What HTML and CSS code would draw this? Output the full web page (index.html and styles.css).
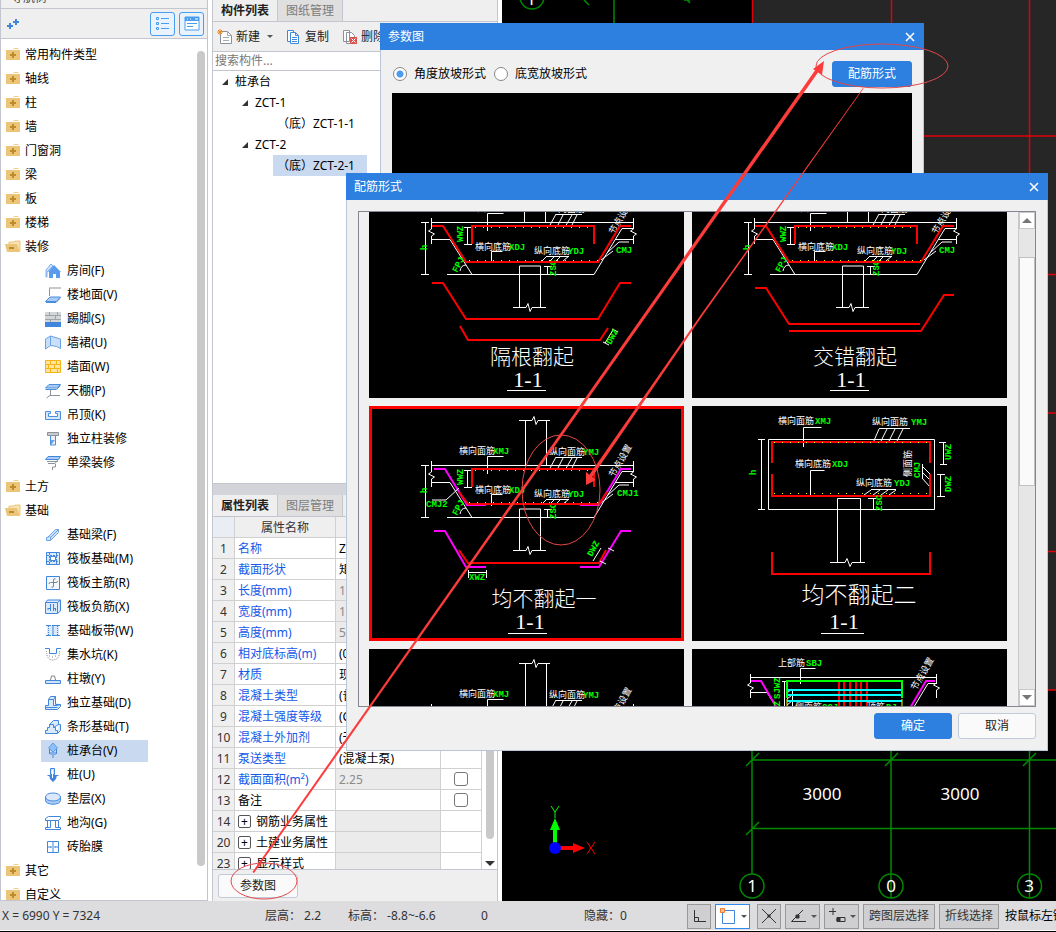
FILE: index.html
```html
<!DOCTYPE html>
<html lang="zh-CN">
<head>
    <meta charset="UTF-8">
    <meta name="viewport" content="width=device-width, initial-scale=1.0">
    <title>构件定义</title>
    <link rel="stylesheet" href="styles.css">
</head>
<body>
    <svg class="defs" width="0" height="0" aria-hidden="true">
        <!-- tree icons -->
        <symbol id="folder" viewBox="0 1 16 16"><path d="M8 3l1-1h4l1 1z" fill="#f3cf8e"/><path d="M1 4h14v10H1z" fill="#edc579"/><path d="M7 6h2v2h2v2H9v2H7v-2H5V8h2z" fill="#bd8a2c"/></symbol>
        <symbol id="folder-open" viewBox="0 1 16 16"><path d="M4 6V4h5l1-1h5v10" fill="#f8e2b4" stroke="#edc579"/><path d="M0 6h12l3 8H2z" fill="#edc579"/><path d="M4 9h5v2H4z" fill="#bd8a2c"/></symbol>
        <symbol id="i-room" viewBox="0 0 16 16"><path d="M1 7l5-6 2 2-6 6v5H1z" fill="#cfe2fa" stroke="#7db0ee"/><path d="M9 2l7 7h-1v6h-4v-4H8v4H4V9H3z" fill="#5a9cec"/></symbol>
        <symbol id="i-floor" viewBox="0 0 16 16"><path d="M4.500 9V1.500M4 1h12" stroke="#8b929a" fill="none"/><path d="M5 10h10.500l-4 4.500H.500z" fill="#a9cbf6" stroke="#4a8ede"/><path d="M1 15.500h10l4-4" stroke="#4a8ede" fill="none"/></symbol>
        <symbol id="i-skirt" viewBox="0 0 16 16"><path d="M0 1h16v10H0z" fill="#d3d5d6"/><path d="M0 4.500h16M0 8.500h16M4.500 1v3M10.500 5v3M5.500 9v2M12.500 1v3" stroke="#9fa4a8"/><path d="M0 11h16v5H0z" fill="#3f86dc"/></symbol>
        <symbol id="i-dado" viewBox="0 0 16 16"><path d="M.500 4l5-3v9.500l-5 3.500zM5.500 1l10 3v9.500l-4-2-6-1z" fill="#c9def9" stroke="#6aa3e8"/></symbol>
        <symbol id="i-wall" viewBox="0 0 16 16"><path d="M.500 1.500h15v12H.500z" fill="#ffe49d" stroke="#f5b316"/><path d="M0 5.500h16M0 9.500h16M5.500 1v4M11.500 1v4M3.500 6v3M9.500 6v3M5.500 10v4M12.500 10v4" stroke="#f5b316"/></symbol>
        <symbol id="i-ceil" viewBox="0 0 16 16"><path d="M4 1.500h11.500l-4 3.500H.500z" fill="#a9cbf6" stroke="#4a8ede"/><path d="M.500 6.500h11l4-4" fill="none" stroke="#4a8ede"/><path d="M5.500 7v5l-4 3M5 12.500h10" fill="none" stroke="#8b929a"/></symbol>
        <symbol id="i-susp" viewBox="0 0 16 16"><path d="M.500 4.500h5v2h-2v3h9v-3h-2v-2h5v8H.500z" fill="#d5e6fb" stroke="#4a8ede"/></symbol>
        <symbol id="i-col" viewBox="0 0 16 16"><path d="M2.500 1.500h11v3h-11z" fill="#c8cbce" stroke="#8b929a"/><path d="M5.500 5v9h5V5" fill="#e8f1fd" stroke="#4a8ede"/><path d="M6 9h4l-4 5z" fill="#6aa3e8"/></symbol>
        <symbol id="i-beam" viewBox="0 0 16 16"><path d="M3 1.500h12.500l-2 3H.500z" fill="#a9cbf6" stroke="#3f86dc"/><path d="M2 6.500h11M3 8.500h7l3-4M7.500 15v-3h3V9" fill="none" stroke="#8b929a"/></symbol>
        <symbol id="f-beam" viewBox="0 0 16 16"><path d="M2.500 10.500l8-8h3v3l-8 8h-4v-3zM5.500 13v-3h-3M5.500 10.500l8-8" fill="#cfe2fa" stroke="#6aa3e8"/></symbol>
        <symbol id="f-raft" viewBox="0 0 16 16"><path d="M1.500 1.500h13v12h-13z" fill="#dbe9fc" stroke="#3f86dc"/><path d="M4.500 2v11M11.500 2v11M2 4.500h12M2 10.500h12" stroke="#3f86dc" stroke-dasharray="2 1"/><path d="M5.500 5.500h5v4h-5z" fill="#fff" stroke="#3f86dc"/></symbol>
        <symbol id="f-main" viewBox="0 0 16 16"><path d="M1.500 1.500h13v13h-13z" fill="#f3f8fe" stroke="#3f86dc"/><path d="M10.500 4q-2-1-2 1v6q0 2-2 1M4 9q0-1.500 1.500-1.500H11q1.500 0 1.500-1.500" fill="none" stroke="#7e858c"/></symbol>
        <symbol id="f-neg" viewBox="0 0 16 16"><path d="M.500 3.500l2-2.500h13v11l-3 2.500H.500zM.500 3.500h12v11M12.500 3.500l3-2.500" fill="#dbe9fc" stroke="#3f86dc"/><path d="M5.500 5v7M8.500 5v7M3 9.500h3M8 9.500h3M3 9v2M10.500 9v3" stroke="#3f86dc"/></symbol>
        <symbol id="f-band" viewBox="0 0 16 16"><path d="M2 2h12v11H2z" fill="#dbe9fc"/><path d="M1 2.500h5M7 2.500h8M1 12.500h5M7 12.500h8M8 2v11" stroke="#3f86dc"/><path d="M3.500 3v9M12.500 3v9" stroke="#3f86dc" stroke-dasharray="1 1"/></symbol>
        <symbol id="f-pit" viewBox="0 0 16 16"><path d="M0 1.500h4.500v5h7v-5H16" fill="none" stroke="#3f86dc"/><path d="M1.500 4q0 9 6.500 9t6.500-9M4 9h1M7 10h1M10 9h1" fill="none" stroke="#7e858c" stroke-dasharray="1 1"/></symbol>
        <symbol id="f-pier" viewBox="0 0 16 16"><path d="M.500 9.500h15v3H.500z" fill="#cfe2fa" stroke="#3f86dc"/><path d="M5.500 9l1-4h3l1 4" fill="#fff" stroke="#7e858c"/></symbol>
        <symbol id="f-iso" viewBox="0 0 16 16"><path d="M.500 10.500h3v-6l2-3h5v8h5v2l-3 3H.500zM3.500 4.500h5v6h4l3-1M8.500 4.500l2-3M.500 12.500h12" fill="#dbe9fc" stroke="#3f86dc"/></symbol>
        <symbol id="f-strip" viewBox="0 0 16 16"><path d="M.500 14.500v-3h2v-3h2v-3h4v3h2v3h2v3zM4.500 5.500l4-4h5v4l-5 3M13.500 5.500h2v6l-3 3" fill="#dbe9fc" stroke="#3f86dc"/></symbol>
        <symbol id="f-cap" viewBox="0 0 16 16"><path d="M8 0l4.500 5L8 9 3.500 5z" fill="#8fc1f7" stroke="#5a9cec"/><path d="M4.500 6v5M11.500 6v5M8 9v6M6 9v3M10 9v3" stroke="#3f86dc"/></symbol>
        <symbol id="f-pile" viewBox="0 0 16 16"><path d="M5.500 1.500h4v6h-4zM2.500 8.500h11" fill="#cfe2fa" stroke="#3f86dc"/><path d="M4 8h8l-1 4H5zM5 12l3 3 3-3z" fill="#3f86dc"/><path d="M7 3h1v8H7z" fill="#fff"/></symbol>
        <symbol id="f-pad" viewBox="0 0 16 16"><path d="M.500 6v3.500c0 5 15 5 15 0V6" fill="#a9cbf6" stroke="#4a8ede"/><ellipse cx="8" cy="6" rx="7.500" ry="4" fill="#dbe9fc" stroke="#4a8ede"/></symbol>
        <symbol id="f-ditch" viewBox="0 0 16 16"><path d="M.500 3.500l3-2h12v2l-2 2H.500zM2.500 5.500v7M5.500 5.500v7M10.500 5.500v7M13.500 5.500v7M.500 12.500h5M10.500 12.500h5v2H.500v-2" fill="none" stroke="#3f86dc"/></symbol>
        <symbol id="f-brick" viewBox="0 0 16 16"><path d="M2.500 2.500h11v11h-11zM8 2v12M2 8h4M10 8h4" fill="#fff" stroke="#3f86dc"/><path d="M6 7v2M10 7v2" stroke="#3f86dc"/></symbol>

        <!-- section drawing shared by the pile cap cards -->
        <g id="pile-top">
            <path class="w" d="M156.500 14v45M177.500 14v45M150 14.500h13l2-4 2 8 2-4h12"/>
        </g>
        <g id="top-labels">
            <text class="cn" x="90" y="48">横向面筋</text><text class="en" x="124" y="48">XMJ</text>
            <text class="cn" x="180" y="49">纵向面筋</text><text class="en" x="214" y="49">YMJ</text>
            <path class="w" d="M118.500 68V50.500h16M187 51.500h26M187 51l-7 13M194 52l-6 12M203 52l-7 12M208 52l-6 12"/>
            <text class="cn" transform="translate(245 72) rotate(-60)">节点设置</text>
        </g>
        <g id="cap">
            <path class="w" d="M62 59.500h203M62.500 55v11l-3 2 6 3-3 2v8M264.500 55v11l-3 2 6 3-3 2v8"/>
            <path class="w" d="M52 59.500h8M52 111.500h8M56.500 59v52"/>
            <path class="w" d="M62 76.500h19l22 35M78 111.500h147l28-46h11M246 76.500h18M238 90l12-11h10M232 97l12-9"/>
            <path class="w" d="M95 64.500h8M95 81.500h8M98.500 64v17M91 108q1-6 6-6"/>
            <path class="w" d="M150.500 144v-41h21v41M144 144.500h13l2-4 2 8 2-4h14M175 103.500h8M178.500 104v7"/>
            <path class="r" d="M103 81V63h122v18"/>
            <path class="dots" d="M106 64.500h116"/>
            <path class="m dot" d="M232 94l14-20"/>
            <text class="cn" x="106" y="87">横向底筋</text><text class="en" x="140" y="87">XDJ</text>
            <text class="cn" x="165" y="91">纵向底筋</text><text class="en" x="199" y="91">YDJ</text>
            <path class="w" d="M122.500 100V88.500h11M178 93.500h22M178 93l-5 5M186 93l-5 5M192 93l-5 5M200 93l-6 5"/>
            <text class="en" transform="translate(58 87) rotate(-90)">h</text>
            <text class="en" transform="translate(94 79) rotate(-90)">WWZ</text>
            <text class="en" transform="translate(187 113) rotate(-90)">ZSC</text>
            <text class="en" transform="translate(88 110) rotate(-62)">FPJ</text>
        </g>
    </svg>

    <div class="app">
        <main class="work">
            <nav class="nav">
                <div class="nav-title">导航树</div>
                <div class="nav-tools">
                    <svg width="14" height="12" viewBox="0 0 14 12"><path d="M0 7h2V5h2v2h2v2H4v2H2V9H0zM6 3h2V1h2v2h2v2h-2v2H8V5H6z" fill="#3f86dc"/></svg>
                    <span class="grow"></span>
                    <button class="tool" aria-label="列表视图"><svg width="16" height="16" viewBox="0 0 16 16" fill="none" stroke="#4a9cf0"><path d="M1.500 1.500h2v2h-2zM1.500 6.500h2v2h-2zM1.500 11.500h2v2h-2zM6 2.500h8M6 7.500h8M6 12.500h8"/></svg></button>
                    <button class="tool" aria-label="窗口视图"><svg width="16" height="16" viewBox="0 0 16 16"><path d="M1 1h14v13H1z" fill="#fff" stroke="#4a9cf0"/><path d="M1 1h14v4H1z" fill="#4a9cf0"/><path d="M3 3h1M6 3h1M11 3h3" stroke="#fff"/><path d="M3 7.500h10M3 10.500h6" stroke="#4a9cf0"/></svg></button>
                </div>
                <div class="nav-body">
                    <ul class="types">
                        <li><a href="#"><svg><use href="#folder"/></svg>常用构件类型</a></li>
                        <li><a href="#"><svg><use href="#folder"/></svg>轴线</a></li>
                        <li><a href="#"><svg><use href="#folder"/></svg>柱</a></li>
                        <li><a href="#"><svg><use href="#folder"/></svg>墙</a></li>
                        <li><a href="#"><svg><use href="#folder"/></svg>门窗洞</a></li>
                        <li><a href="#"><svg><use href="#folder"/></svg>梁</a></li>
                        <li><a href="#"><svg><use href="#folder"/></svg>板</a></li>
                        <li><a href="#"><svg><use href="#folder"/></svg>楼梯</a></li>
                        <li><a href="#"><svg><use href="#folder-open"/></svg>装修</a>
                            <ul>
                                <li><a href="#"><svg><use href="#i-room"/></svg>房间(F)</a></li>
                                <li><a href="#"><svg><use href="#i-floor"/></svg>楼地面(V)</a></li>
                                <li><a href="#"><svg><use href="#i-skirt"/></svg>踢脚(S)</a></li>
                                <li><a href="#"><svg><use href="#i-dado"/></svg>墙裙(U)</a></li>
                                <li><a href="#"><svg><use href="#i-wall"/></svg>墙面(W)</a></li>
                                <li><a href="#"><svg><use href="#i-ceil"/></svg>天棚(P)</a></li>
                                <li><a href="#"><svg><use href="#i-susp"/></svg>吊顶(K)</a></li>
                                <li><a href="#"><svg><use href="#i-col"/></svg>独立柱装修</a></li>
                                <li><a href="#"><svg><use href="#i-beam"/></svg>单梁装修</a></li>
                            </ul>
                        </li>
                        <li><a href="#"><svg><use href="#folder"/></svg>土方</a></li>
                        <li><a href="#"><svg><use href="#folder-open"/></svg>基础</a>
                            <ul>
                                <li><a href="#"><svg><use href="#f-beam"/></svg>基础梁(F)</a></li>
                                <li><a href="#"><svg><use href="#f-raft"/></svg>筏板基础(M)</a></li>
                                <li><a href="#"><svg><use href="#f-main"/></svg>筏板主筋(R)</a></li>
                                <li><a href="#"><svg><use href="#f-neg"/></svg>筏板负筋(X)</a></li>
                                <li><a href="#"><svg><use href="#f-band"/></svg>基础板带(W)</a></li>
                                <li><a href="#"><svg><use href="#f-pit"/></svg>集水坑(K)</a></li>
                                <li><a href="#"><svg><use href="#f-pier"/></svg>柱墩(Y)</a></li>
                                <li><a href="#"><svg><use href="#f-iso"/></svg>独立基础(D)</a></li>
                                <li><a href="#"><svg><use href="#f-strip"/></svg>条形基础(T)</a></li>
                                <li><a href="#" class="on"><svg><use href="#f-cap"/></svg>桩承台(V)</a></li>
                                <li><a href="#"><svg><use href="#f-pile"/></svg>桩(U)</a></li>
                                <li><a href="#"><svg><use href="#f-pad"/></svg>垫层(X)</a></li>
                                <li><a href="#"><svg><use href="#f-ditch"/></svg>地沟(G)</a></li>
                                <li><a href="#"><svg><use href="#f-brick"/></svg>砖胎膜</a></li>
                            </ul>
                        </li>
                        <li><a href="#"><svg><use href="#folder"/></svg>其它</a></li>
                        <li><a href="#"><svg><use href="#folder"/></svg>自定义</a></li>
                    </ul>
                    <div class="bar"></div>
                </div>
            </nav>

            <div class="middle">
                <section class="list">
                    <div class="tabs"><button class="tab active">构件列表</button><button class="tab">图纸管理</button></div>
                    <div class="cmds">
                        <button><svg width="16" height="16" viewBox="0 0 16 16"><path d="M3.500 2.500h7l4 4v8h-11z" fill="#fff" stroke="#8b929a"/><path d="M10.500 2.500v4h4M6 8.500h6M6 11.500h6" fill="none" stroke="#a4abb1"/><path d="M1 1l4 4M5 1L1 5M3 0v6M0 3h6" stroke="#ee8a1d"/></svg>新建<i class="caret"></i></button>
                        <button><svg width="16" height="16" viewBox="0 0 16 16" fill="#fff" stroke="#3f86dc"><path d="M1.500 1.500h6v11h-6z"/><path d="M4.500 3.500h5l3 3v8h-8zM9.500 3.500v3h3M6 8.500h5M6 10.500h5M6 12.500h5"/></svg>复制</button>
                        <button><svg width="16" height="16" viewBox="0 0 16 16"><path d="M1.500 1.500h6v11h-6zM4.500 3.500h5l3 3v8h-8z" fill="#fff" stroke="#8b929a"/><path d="M8 8h7v7H8z" fill="#d9534f"/><path d="M9.500 9.500l4 4M13.500 9.500l-4 4" stroke="#fff"/></svg>删除</button>
                    </div>
                    <input class="search" type="text" placeholder="搜索构件..." aria-label="搜索构件">
                    <ul class="parts">
                        <li><a href="#" class="l1"><i class="tri"></i>桩承台</a></li>
                        <li><a href="#" class="l2"><i class="tri"></i>ZCT-1</a></li>
                        <li><a href="#" class="l3">（底）ZCT-1-1</a></li>
                        <li><a href="#" class="l2"><i class="tri"></i>ZCT-2</a></li>
                        <li><a href="#" class="l3 on">（底）ZCT-2-1</a></li>
                    </ul>
                </section>
                <div class="split"></div>
                <section class="props">
                    <div class="tabs"><button class="tab active">属性列表</button><button class="tab">图层管理</button></div>
                    <div class="grid-wrap">
                        <table>
                            <thead><tr><th></th><th>属性名称</th><th>属性值</th><th>附加</th></tr></thead>
                            <tbody>
                                <tr><td>1</td><td>名称</td><td>ZCT-2</td><td></td></tr>
                                <tr><td>2</td><td>截面形状</td><td>矩形</td><td></td></tr>
                                <tr class="ro"><td>3</td><td>长度(mm)</td><td>1500</td><td></td></tr>
                                <tr class="ro"><td>4</td><td>宽度(mm)</td><td>1500</td><td></td></tr>
                                <tr class="ro"><td>5</td><td>高度(mm)</td><td>500</td><td></td></tr>
                                <tr><td>6</td><td>相对底标高(m)</td><td>(0)</td><td></td></tr>
                                <tr><td>7</td><td>材质</td><td>现浇混凝土</td><td></td></tr>
                                <tr><td>8</td><td>混凝土类型</td><td>(普通)</td><td></td></tr>
                                <tr><td>9</td><td>混凝土强度等级</td><td>(C30)</td><td></td></tr>
                                <tr><td>10</td><td>混凝土外加剂</td><td>(无)</td><td></td></tr>
                                <tr><td>11</td><td>泵送类型</td><td>(混凝土泵)</td><td></td></tr>
                                <tr class="ro"><td>12</td><td>截面面积(m²)</td><td>2.25</td><td><input type="checkbox" aria-label="截面面积附加"></td></tr>
                                <tr class="plain"><td>13</td><td>备注</td><td></td><td><input type="checkbox" aria-label="备注附加"></td></tr>
                                <tr class="plain ro"><td>14</td><td><button class="plus" aria-label="展开">+</button>钢筋业务属性</td><td></td><td></td></tr>
                                <tr class="plain ro"><td>20</td><td><button class="plus" aria-label="展开">+</button>土建业务属性</td><td></td><td></td></tr>
                                <tr class="plain ro"><td>23</td><td><button class="plus" aria-label="展开">+</button>显示样式</td><td></td><td></td></tr>
                            </tbody>
                        </table>
                        <div class="grid-bar"><div class="bar"></div><i class="caret dark"></i></div>
                    </div>
                    <div class="props-foot"><button class="btn small">参数图</button></div>
                </section>
            </div>

            <div class="canvas">
                <svg class="cad">
                    <rect x="250" y="0" width="100%" height="690" fill="#262626"/>
                    <path d="M250.500 0v690M389.500 0v690M527.500 0v690M250 136h400M250 274.500h400M250 413h400M250 551.500h400M250 690h400" stroke="#e00008" stroke-width="1.500"/>
                    <g stroke="#008a00" fill="none" stroke-width="1.500">
                        <circle cx="30" cy="-3" r="12"/><path d="M82 0l5 5"/><path d="M112 0v30"/><path d="M179 -6l9 9M182 0h6M250 750v124M389 750v124M527.500 750v124M250 760h400M250 828.500h400M244 766l13-13M383 766l13-13M521 766l13-13M244 835l13-13"/>
                        <path d="M389 874v24M527.500 874v24"/>
                        <circle cx="250" cy="886" r="12"/><circle cx="389" cy="886" r="12"/><circle cx="527.500" cy="886" r="12"/>
                    </g>
                    <g class="cad-text">
                        <text x="29" y="5">1</text>
                        <text x="320" y="800">3000</text><text x="458" y="800">3000</text>
                        <text x="250" y="892">1</text><text x="389" y="892">0</text><text x="527" y="892">3</text>
                    </g>
                    <path d="M51 848v-18h-3l5-12 5 12h-3v18z" fill="#0f0"/><path d="M56 846h15v-3l12 5-12 5v-3H56z" fill="#f00"/>
                    <circle cx="53" cy="848" r="6" fill="#00f"/>
                    <path d="M49 806l4 6 4-6M53 812v6" stroke="#0f0" fill="none"/><path d="M85 842l8 12M93 842l-8 12" stroke="#f00"/>
                </svg>
            </div>
        </main>

        <footer class="status">
            <span class="s-pos">X = 6990 Y = 7324</span>
            <span class="s-floor">层高： 2.2</span>
            <span class="s-level">标高： -8.8~-6.6</span>
            <span class="s-num">0</span>
            <span class="s-hide">隐藏：0</span>
            <div class="snaps">
                <button class="snap w24" aria-label="正交"><svg width="18" height="18" viewBox="0 0 18 18" fill="none" stroke="#333"><path d="M4.500 3v11.500H16M4.500 10.500h4v4"/></svg></button>
                <button class="snap w35 sel" aria-label="矩形选择"><svg width="18" height="18" viewBox="0 0 18 18"><path d="M3.500 3.500h12v13h-12z" fill="#fff" stroke="#3f86dc"/><path d="M1.500 1.500h4v4h-4z" fill="#f8c08e" stroke="#ee7a30"/></svg><i class="caret"></i></button>
                <button class="snap w24 apart" aria-label="交点"><svg width="18" height="18" viewBox="0 0 18 18" fill="none" stroke="#333"><path d="M2 2l14 14M16 2L2 16M8 8h2v2H8z"/></svg></button>
                <button class="snap w35" aria-label="垂点"><svg width="18" height="18" viewBox="0 0 18 18" fill="none" stroke="#333"><path d="M14 3L2.500 14.500H17"/><path d="M7 8h3v3H7z" fill="#333"/></svg><i class="caret"></i></button>
                <button class="snap w35" aria-label="偏移"><svg width="18" height="18" viewBox="0 0 18 18" fill="none" stroke="#333"><path d="M5 1v7M1 4.500h7M9 10.500h8v4H9z"/><path d="M9 11h3v3H9z" fill="#333"/></svg><i class="caret"></i></button>
                <button class="snap w72">跨图层选择</button>
                <button class="snap w60">折线选择</button>
            </div>
            <span class="s-tip">按鼠标左键指定第一个角点</span>
        </footer>
    </div>

    <div class="dialog dlg-param" role="dialog" aria-label="参数图">
        <div class="dlg-title"><span>参数图</span><button class="close" aria-label="关闭"><svg width="10" height="10" viewBox="0 0 10 10"><path d="M1 1l8 8M9 1L1 9" stroke="#fff" stroke-width="1.500"/></svg></button></div>
        <div class="param-row">
            <label><input type="radio" name="slope" checked>角度放坡形式</label>
            <label><input type="radio" name="slope">底宽放坡形式</label>
            <span class="grow"></span>
            <button class="btn primary wide">配筋形式</button>
        </div>
        <div class="param-view"></div>
    </div>

    <div class="dialog dlg-rebar" role="dialog" aria-label="配筋形式">
        <div class="dlg-title"><span>配筋形式</span><button class="close" aria-label="关闭"><svg width="10" height="10" viewBox="0 0 10 10"><path d="M1 1l8 8M9 1L1 9" stroke="#fff" stroke-width="1.500"/></svg></button></div>
        <div class="picker">
            <div class="cards">
                <svg class="card" viewBox="0 49 315 186">
                    <path class="w" d="M155.500 40v19M176.500 40v19"/>
                    <use href="#top-labels"/>
                    <use href="#cap"/>
                    <text class="en" x="247" y="90">CMJ</text>
                    <path class="r" d="M63 63h11l23 36h132l22-36h11M63 120h11l23 36h132l22-36h11M91 163l8 14h132l8-12"/>
                    <path class="dots" d="M100 97.500h130M106 64.500h116"/>
                    <path class="w" d="M234 179l6 3M243 166l6 3M236 180l8-13"/>
                    <text class="en" transform="translate(242 182) rotate(-62)">DWZ</text>
                    <text class="name" x="163" y="201">隔根翻起</text>
                    <text class="num" x="159" y="224">1-1</text>
                    <path class="w" d="M138 227.500h39"/>
                </svg>
                <svg class="card" viewBox="0 49 315 186">
                    <path class="w" d="M155.500 40v19M176.500 40v19"/>
                    <use href="#top-labels"/>
                    <use href="#cap"/>
                    <text class="en" x="247" y="90">CMJ</text>
                    <path class="r" d="M63 63h11l23 36h132l22-36h11M63 125h11l23 36h131M97 168h132l23-36h10"/>
                    <path class="dots" d="M100 97.500h130M106 64.500h116"/>
                    <text class="name" x="163" y="201">交错翻起</text>
                    <text class="num" x="159" y="224">1-1</text>
                    <path class="w" d="M138 227.500h39"/>
                </svg>
                <svg class="card picked" viewBox="0 0 315 235">
                    <use href="#pile-top"/>
                    <use href="#top-labels"/>
                    <use href="#cap"/>
                    <path class="m" d="M65 63h11l22 36h19M211 99h19l22-36h10M65 125h11l21 36h20M211 161h19l22-36h10"/>
                    <path class="r" d="M90 86l9 12h131l8-12M90 144l9 13h131l7-13"/>
                    <path class="dots" d="M100 96.500h130"/>
                    <path class="w" d="M90 82l-13 12H63M99.500 164v8M117.500 164v8M99 166.500h18M231 155l6 3M239 142l6 3M224 155l8-13"/>
                    <text class="en" x="57" y="101">CMJ2</text>
                    <text class="en" x="248" y="90">CMJ1</text>
                    <text class="en" x="100" y="174">XWZ</text>
                    <text class="en" transform="translate(223 151) rotate(-62)">DWZ</text>
                    <text class="name" x="175" y="200">均不翻起一</text>
                    <text class="num" x="161" y="223">1-1</text>
                    <path class="w" d="M139 227.500h39"/>
                </svg>
                <svg class="card" viewBox="0 0 315 235">
                    <path class="w" d="M76.500 33.500h166v70h-166zM66 33.500h7M66 103.500h7M69.500 33v70"/>
                    <path class="w" d="M145.500 156V92.500h23V156M138 156.500h15l2-4 3 8 2-4h13M176 92.500h8M181.500 92v11"/>
                    <path class="w" d="M111.500 41V21.500h18M187 22.500h31M187 23l-6 14M195 23l-7 14M203 23l-7 14M211 23l-7 14M118.500 91V64.500h14M179 83.500h25M179 84l-7 5M188 84l-7 5M196 84l-7 5M204 84l-7 5"/>
                    <path class="w" d="M247 36.500h7M248 58.500h7M251.500 36v23M245 68.500h8M245 90.500h8M248.500 68v22M230.500 58v14M230 60l8 8M230 66l8 8M230 72l8 9"/>
                    <path class="r" d="M80 57V36h158v21M80 68v22h158V68M80 146v22h158v-22"/>
                    <path class="dots" d="M82 36.500h154M82 87.500h154"/>
                    <text class="cn" x="86" y="18">横向面筋</text><text class="en" x="123" y="18">XMJ</text>
                    <text class="cn" x="180" y="19">纵向面筋</text><text class="en" x="219" y="19">YMJ</text>
                    <text class="cn" x="103" y="61">横向底筋</text><text class="en" x="140" y="61">XDJ</text>
                    <text class="cn" x="164" y="80">纵向底筋</text><text class="en" x="202" y="80">YDJ</text>
                    <text class="cn" transform="translate(219 71) rotate(-90)">侧面筋</text>
                    <text class="en" transform="translate(228 72) rotate(-90)">CMJ</text>
                    <text class="en" transform="translate(64 69) rotate(-90)">h</text>
                    <text class="en" transform="translate(259 54) rotate(-90)">UWZ</text>
                    <text class="en" transform="translate(259 86) rotate(-90)">DWZ</text>
                    <text class="en" transform="translate(190 105) rotate(-90)">ZSC</text>
                    <text class="name big" x="167" y="197">均不翻起二</text>
                    <text class="num" x="152" y="223">1-1</text>
                    <path class="w" d="M129 227.500h43"/>
                </svg>
                <svg class="card" viewBox="0 0 315 235">
                    <use href="#pile-top"/>
                    <use href="#top-labels"/>
                    <use href="#cap"/>
                </svg>
                <svg class="card" viewBox="0 0 315 235">
                    <path class="w" d="M58 28.500h187M58.500 25v9l-3 2 6 3-3 2v8M244.500 25v9l-3 2 6 3-3 2v8M58 43.500h17l10 16M245 34.500h-9l-15 25M108.500 35V19.500h15M90 32.500h5M92.500 32v28M100.500 40v20M95 44l5-4M95 50l5-4M95 56l5-4"/>
                    <path class="r" d="M147 33v30M152 33v30M158 33v30M164 33v30M169 33v30M175 33v30"/>
                    <path class="c" d="M95 41h115M95 46h115M95 52h115"/>
                    <path class="g" d="M95 49V32h115v17"/>
                    <path class="y" d="M95 50v12M210 50v12"/>
                    <path class="m" d="M59 32h10l16 27M243 32h-9l-16 27"/>
                    <text class="cn" x="86" y="17">上部筋</text><text class="en" x="114" y="17">SBJ</text>
                    <text class="cn" x="103" y="61">侧面筋</text><text class="en" x="130" y="61">CCJ</text>
                    <text class="cn" x="175" y="61">顶筋</text><text class="en" x="194" y="61">DJ</text>
                    <text class="en" transform="translate(88 50) rotate(-90)">SJWZ</text>
                    <text class="en" transform="translate(88 68) rotate(-90)">DWZ</text>
                    <text class="cn" transform="translate(224 42) rotate(-60)">节点设置</text>
                </svg>
            </div>
            <div class="scroll">
                <button class="arrow up" aria-label="向上"></button>
                <div class="track"><div class="thumb"></div></div>
                <button class="arrow down" aria-label="向下"></button>
            </div>
        </div>
        <div class="dlg-foot">
            <button class="btn primary">确定</button>
            <button class="btn">取消</button>
        </div>
    </div>

    <!-- red pen marks over the windows -->
    <svg class="marks">
        <g fill="none" stroke="#e2484a">
            <ellipse cx="264" cy="881" rx="33" ry="18"/>
            <ellipse cx="882" cy="66" rx="66" ry="22"/>
            <ellipse cx="561" cy="490" rx="39" ry="55"/>
        </g>
        <g fill="#fc3b3b">
            <path d="M252.500 872L816 69l3 2L254 873z"/>
            <path d="M824 61l-2 14-9-6z"/>
            <path d="M863 88L700 316 588.500 476l3 2L701.500 317 863.500 88.500z"/>
            <path d="M586 485l0-13 10 8z"/>
        </g>
    </svg>
</body>
</html>
```

FILE: styles.css
```css
* {
    box-sizing: border-box;
}

body {
    margin: 0;
    height: 100vh;
    overflow: hidden;
    position: relative;
    background: #fff;
    color: #000;
    font-family: "Noto Sans", "Noto Sans CJK SC", sans-serif;
    font-size: 12px;
    line-height: 20px;
}

ul {
    list-style: none;
    margin: 0;
    padding: 0;
}

a {
    color: inherit;
    text-decoration: none;
}

button,
input {
    font: inherit;
    color: inherit;
    margin: 0;
}

button {
    padding: 0;
    border: 0;
    background: none;
    white-space: nowrap;
}

.defs {
    position: absolute;
}

.grow {
    flex: 1;
}

.app {
    height: 100vh;
    display: flex;
    flex-direction: column;
    border-bottom: 1px solid #000;
}

.work {
    flex: 1;
    min-height: 0;
    display: flex;
    gap: 4px;
}

/* left navigation */
.nav {
    width: 208px;
    display: flex;
    flex-direction: column;
    border: 1px solid #c4c6cf;
    border-top: 0;
}

.nav-title {
    height: 9px;
    display: flex;
    align-items: flex-end;
    padding-left: 10px;
    overflow: hidden;
    background: #f0f0f0;
    color: #444;
    border-bottom: 1px solid #c4c6cf;
}

.nav-tools {
    height: 30px;
    display: flex;
    align-items: center;
    gap: 4px;
    padding: 0 3px 0 6px;
    background: #efefef;
    border-bottom: 1px solid #c4c6cf;
}

.tool {
    width: 25px;
    height: 24px;
    display: flex;
    align-items: center;
    justify-content: center;
    background: #e9f3fe;
    border: 1px solid #4a9cf0;
    border-radius: 3px;
}

.nav-body {
    flex: 1;
    min-height: 0;
    display: flex;
    overflow: hidden;
}

.types {
    flex: 1;
    padding-top: 4px;
}

.types a {
    display: flex;
    align-items: center;
    gap: 4px;
    width: max-content;
    height: 24px;
    padding-left: 4px;
}

.types svg {
    width: 16px;
    height: 16px;
}

.types ul {
    padding-left: 40px;
}

.types ul a {
    gap: 6px;
    width: 107px;
}

.types .on {
    height: 22px;
    margin: 1px 0;
    background: #c9d9f0;
}

.bar {
    width: 8px;
    border-radius: 4px;
    background: #c9c9c9;
}

.nav-body .bar {
    margin: 12px 2px 34px 0;
}

/* component list and properties */
.middle {
    width: 286px;
    display: flex;
    flex-direction: column;
    background: #efefef;
    border: solid #c4c6cf;
    border-width: 0 1px;
}

.list {
    flex: 1;
    display: flex;
    flex-direction: column;
    background: #fff;
}

.tabs {
    height: 22px;
    display: flex;
    background: #efefef;
    border-bottom: 1px solid #c4c6cf;
}

.tab {
    width: 65px;
    background: #dfdfdf;
    color: #7c7c7c;
    border-right: 1px solid #c4c6cf;
}

.tab.active {
    background: #efefef;
    color: #222;
    font-weight: bold;
}

.cmds {
    height: 29px;
    display: flex;
    align-items: center;
    gap: 13px;
    padding-left: 4px;
    background: #efefef;
    overflow: hidden;
}

.cmds button {
    display: flex;
    align-items: center;
    gap: 3px;
    flex: none;
    color: #222;
}

.caret {
    border: 3px solid transparent;
    border-top-color: #555;
    border-bottom: 0;
    margin-left: 4px;
}

.caret.dark {
    border-width: 5px 5px 0;
    border-top-color: #333;
}

.search {
    height: 20px;
    padding: 0 2px;
    border: solid #c4c6cf;
    border-width: 1px 0;
    outline: none;
    width: 100%;
    background: #fff;
}

.search::placeholder {
    color: #777;
}

.parts a {
    display: flex;
    align-items: center;
    gap: 7px;
    height: 21px;
    width: max-content;
}

.parts .l1 {
    padding-left: 9px;
}

.parts .l2 {
    padding-left: 29px;
}

.parts .l3 {
    min-width: 94px;
    padding-left: 4px;
    margin-left: 60px;
}

.parts .on {
    background: #c9d9f0;
}

.tri {
    border-style: solid;
    border-width: 0 0 6px 6px;
    border-color: transparent transparent #333;
}

.split {
    height: 12px;
    background: #d3d4d9;
    border-top: 1px solid #c4c6cf;
}

.props {
    height: 406px;
    display: flex;
    flex-direction: column;
}

.grid-wrap {
    flex: 1;
    min-height: 0;
    display: flex;
    overflow: hidden;
    background: #fff;
    border-bottom: 1px solid #c4c6cf;
}

table {
    width: 269px;
    height: max-content;
    table-layout: fixed;
    border-collapse: separate;
    border-spacing: 0;
}

th,
td {
    height: 21px;
    padding: 2px 3px 0;
    border: solid #d0d0d0;
    border-width: 0 1px 1px 0;
    line-height: 18px;
    font-weight: normal;
    white-space: nowrap;
    overflow: hidden;
}

th {
    background: #efefef;
    color: #333;
}

th:nth-child(1) {
    width: 22px;
    background: #e9eef5;
}

th:nth-child(2) {
    width: 101px;
}

th:nth-child(3) {
    width: 105px;
}

td:nth-child(1) {
    padding: 2px 0 0;
    text-align: center;
    background: #efefef;
    color: #333;
}

td:nth-child(2) {
    color: #1558e8;
}

td:nth-child(4) {
    padding: 0 4px 0 3px;
    text-align: center;
}

.ro td:nth-child(3) {
    background: #ebebeb;
    color: #8a8a8a;
}

.plain td:nth-child(2) {
    color: #000;
}

input[type="checkbox"] {
    appearance: none;
    display: block;
    width: 14px;
    height: 14px;
    margin: 0 auto;
    border: 1px solid #777;
    border-radius: 3px;
    background: #fff;
}

.plus {
    width: 13px;
    height: 13px;
    margin-right: 5px;
    border: 1px solid #555;
    border-radius: 2px;
    line-height: 11px;
    background: #fff;
}

.grid-bar {
    flex: 1;
    display: flex;
    flex-direction: column;
    align-items: center;
    gap: 22px;
    padding-bottom: 3px;
}

.grid-bar .bar {
    flex: 1;
}

.grid-bar .caret {
    margin: 0;
}

.props-foot {
    height: 31px;
    padding: 4px 5px;
}

/* drawing area */
.canvas {
    flex: 1;
    min-width: 0;
    background: #000;
}

.cad {
    display: block;
    width: 100%;
    height: 100%;
}

.cad-text {
    fill: #fff;
    font-size: 17px;
    text-anchor: middle;
}

/* status bar */
.status {
    height: 30px;
    display: flex;
    align-items: center;
    padding: 1px 0 0 2px;
    overflow: hidden;
    white-space: nowrap;
    background: #dddde0;
    border-bottom: 1px solid #fff;
    color: #333;
}

.status > * {
    flex: none;
}

.s-pos {
    width: 263px;
}

.s-floor {
    width: 83px;
}

.s-level {
    width: 133px;
}

.s-num {
    width: 103px;
}

.s-hide {
    width: 103px;
}

.snaps {
    display: flex;
    gap: 4px;
}

.snap {
    height: 25px;
    display: flex;
    align-items: center;
    justify-content: center;
    background: #cfcfd1;
    border: 1px solid #999;
}

.snap.sel {
    background: #fff;
    border-color: #2d8cf0;
}

.snap.apart {
    margin-left: 3px;
}

.w24 {
    width: 24px;
}

.w35 {
    width: 35px;
}

.w60 {
    width: 60px;
}

.w72 {
    width: 72px;
}

.s-tip {
    margin-left: 6px;
    color: #000;
}

/* floating windows */
.dialog {
    position: absolute;
    display: flex;
    flex-direction: column;
    background: #f0f0f0;
    border: 1px solid #b9c6d8;
    border-top: 0;
}

.dlg-param {
    left: 380px;
    top: 23px;
    width: 544px;
    height: 200px;
}

.dlg-rebar {
    left: 346px;
    top: 173px;
    width: 702px;
    height: 578px;
}

.dlg-title {
    height: 27px;
    margin: 0 -1px;
    padding: 0 8px;
    display: flex;
    align-items: center;
    justify-content: space-between;
    background: #2d7fe0;
    color: #fff;
}

.close {
    display: flex;
    padding: 1px;
}

.param-row {
    height: 43px;
    display: flex;
    align-items: center;
    gap: 8px;
    padding: 4px 11px 0 12px;
}

.param-row label {
    display: flex;
    align-items: center;
    gap: 7px;
}

input[type="radio"] {
    appearance: none;
    width: 14px;
    height: 14px;
    border: 1px solid #888;
    border-radius: 50%;
    background: #fff;
}

input[type="radio"]:checked {
    background: radial-gradient(circle, #4a9cf0 3px, #fff 4px);
}

.param-view {
    flex: 1;
    margin: 0 11px;
    background: #000;
}

.btn {
    width: 78px;
    height: 26px;
    background: #fafafa;
    border: 1px solid #c2cadb;
    border-radius: 3px;
    color: #222;
}

.btn.primary {
    background: #2d7fe0;
    border-color: #2d7fe0;
    color: #fff;
}

.btn.wide {
    width: 80px;
}

.btn.small {
    width: 80px;
    height: 24px;
}

.picker {
    flex: 1;
    min-height: 0;
    display: flex;
    margin: 11px 11px 0;
    border: 1px solid #828790;
}

.cards {
    flex: 1;
    display: grid;
    grid-template-columns: 1fr 1fr;
    grid-template-rows: 186px 235px 235px;
    gap: 8px;
    padding: 0 11px 0 10px;
    overflow: hidden;
}

.card {
    width: 100%;
    height: 100%;
    background: #000;
}

.card.picked {
    outline: 3px solid #f00;
    outline-offset: -3px;
}

.w,
.r,
.m,
.c,
.g,
.y,
.dots {
    fill: none;
    stroke: #fff;
}

.r {
    stroke: #f00;
    stroke-width: 2;
}

.m {
    stroke: #f0f;
    stroke-width: 2;
}

.m.dot {
    stroke-width: 1;
    stroke-dasharray: 1 4;
}

.c {
    stroke: #0ff;
    stroke-width: 2;
}

.g {
    stroke: #0f0;
    stroke-width: 2;
}

.y {
    stroke: #ff0;
}

.dots {
    stroke: #ff0;
    stroke-dasharray: 1 7;
}

.cn {
    fill: #fff;
    font-size: 9px;
}

.en {
    fill: #0f0;
    font-family: "Liberation Mono", monospace;
    font-size: 9px;
    font-weight: bold;
}

.name {
    fill: #fff;
    font-family: "Noto Sans CJK SC", sans-serif;
    font-weight: 300;
    font-size: 21px;
    text-anchor: middle;
}

.name.big {
    font-size: 23px;
}

.num {
    fill: #fff;
    font-family: "Liberation Serif", serif;
    font-size: 22px;
    text-anchor: middle;
}

.scroll {
    width: 17px;
    display: flex;
    flex-direction: column;
    background: #e6e6e6;
    border-left: 1px solid #c8c8c8;
}

.arrow {
    height: 17px;
    display: flex;
    align-items: center;
    justify-content: center;
    background: #fff;
    border: 1px solid #c8c8c8;
}

.arrow::before {
    content: "";
    border: solid transparent;
    border-width: 5px;
}

.up::before {
    border-top: 0;
    border-bottom-color: #777;
}

.down::before {
    border-bottom: 0;
    border-top-color: #777;
}

.track {
    flex: 1;
    padding-top: 28px;
}

.thumb {
    height: 53%;
    background: #fafafa;
    border: 1px solid #c0c0c0;
}

.dlg-foot {
    display: flex;
    justify-content: flex-end;
    gap: 6px;
    padding: 6px 11px 11px;
}

.marks {
    position: absolute;
    left: 0;
    top: 0;
    width: 100%;
    height: 100%;
    pointer-events: none;
}
```
